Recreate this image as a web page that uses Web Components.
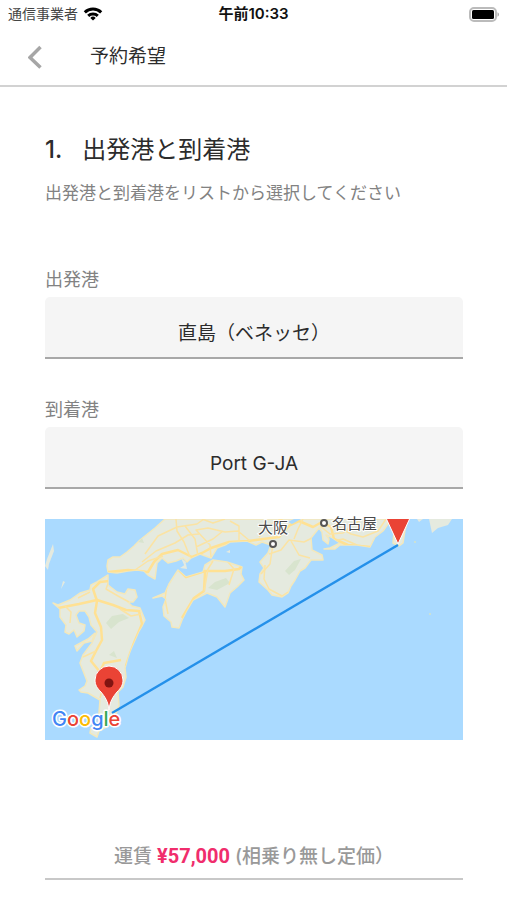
<!DOCTYPE html>
<html lang="ja">
<head>
<meta charset="utf-8">
<meta name="viewport" content="width=device-width, initial-scale=1">
<title>予約希望</title>
<style>
  :root {
    --ink: #2c2c2c;
    --muted: #828282;
    --field: #f5f5f5;
    --line: #a8a8a8;
    --accent: #f02d6c;
  }

  body {
    margin: 0;
    background: #fff;
    color: var(--ink);
    font-family: Inter, "Noto Sans CJK JP", sans-serif;
  }
</style>
</head>
<body>
<booking-page></booking-page>

<script>
  function define(name, html) {
    const template = document.createElement('template');
    template.innerHTML = html;

    customElements.define(name, class extends HTMLElement {
      connectedCallback() {
        if (this.shadowRoot) return;
        this.attachShadow({ mode: 'open' }).appendChild(template.content.cloneNode(true));
      }
    });
  }

  define('status-bar', `
    <style>
      :host {
        display: grid;
        grid-template-columns: 1fr auto 1fr;
        align-items: center;
        height: 28px;
        padding: 0 8px;
      }
      .carrier {
        display: flex;
        align-items: center;
        gap: 5px;
        font-size: 14px;
        line-height: 20px;
        color: #444;
      }
      .time {
        font-size: 15px;
        line-height: 20px;
        font-weight: 600;
        color: #111;
      }
      .battery {
        justify-self: end;
      }
      svg {
        display: block;
      }
    </style>
    <div class="carrier">
      <slot name="carrier"></slot>
      <svg width="20" height="14" viewBox="0 0 20 14" fill="none" stroke="#000" stroke-width="3">
        <path d="M1.8 5.3a11.8 11.8 0 0 1 16.4 0"/>
        <path d="M5.2 8.8a7 7 0 0 1 9.6 0"/>
        <path d="M10 13.6 7.3 10.9a3.9 3.9 0 0 1 5.4 0z" fill="#000" stroke="none"/>
      </svg>
    </div>
    <div class="time"><slot name="time"></slot></div>
    <svg class="battery" width="30" height="15" viewBox="0 0 30 15">
      <rect x="1" y="1" width="26" height="13" rx="4" fill="#fff" stroke="#bbb" stroke-width="2"/>
      <rect x="3" y="3" width="22" height="9" rx="1.5"/>
      <path d="M28.5 5.3c2 .9 2 3.5 0 4.4z" fill="#aaa"/>
    </svg>
  `);

  define('nav-header', `
    <style>
      :host {
        display: flex;
        align-items: center;
        gap: 42px;
        height: 57px;
        padding: 0 22px;
        border-bottom: 2px solid #d2d2d2;
      }
      button {
        padding: 0 6px;
        border: 0;
        background: none;
        cursor: pointer;
      }
      svg {
        display: block;
      }
      h1 {
        margin: 0;
        font-size: 19px;
        line-height: 28px;
        font-weight: 400;
      }
    </style>
    <button type="button" aria-label="戻る">
      <svg width="14" height="24" viewBox="0 0 14 24" fill="none" stroke="#a6a6a6" stroke-width="3.5">
        <path d="M12.5 2 2 12.500l10.500 10"/>
      </svg>
    </button>
    <h1><slot></slot></h1>
  `);

  define('step-heading', `
    <style>
      :host {
        display: block;
      }
      h2 {
        display: flex;
        gap: 20px;
        margin: 0;
        font-size: 24px;
        line-height: 36px;
        font-weight: 400;
      }
      .number {
        font-weight: 500;
      }
      p {
        margin: 11px 0 0;
        font-size: 17px;
        line-height: 28px;
        color: var(--muted);
      }
    </style>
    <h2><span class="number"><slot name="number"></slot></span><slot name="title"></slot></h2>
    <p><slot></slot></p>
  `);

  // A select has to own its options, so label and value come in as attributes
  customElements.define('port-select', class extends HTMLElement {
    connectedCallback() {
      if (this.shadowRoot) return;
      const root = this.attachShadow({ mode: 'open' });
      root.innerHTML = `
        <style>
          :host {
            display: block;
          }
          label {
            display: block;
            margin-bottom: 3px;
            font-size: 18px;
            line-height: 28px;
            color: var(--muted);
          }
          select {
            display: block;
            width: 100%;
            height: 62px;
            margin: 0;
            padding: 12px 0 0;
            appearance: none;
            border: 0;
            border-bottom: 2px solid var(--line);
            border-radius: 5px 5px 0 0;
            background: var(--field);
            color: var(--ink);
            font-family: inherit;
            font-size: 19px;
            text-align: center;
            text-align-last: center;
          }
        </style>
        <label for="port">${this.getAttribute('label')}</label>
        <select id="port"><option>${this.getAttribute('value')}</option></select>
      `;
    }
  });

  define('route-map', `
    <style>
      :host {
        display: block;
      }
      svg {
        display: block;
        width: 100%;
        height: auto;
        overflow: visible;
      }
      .city {
        font-family: "Noto Sans CJK JP", sans-serif;
        font-size: 15px;
        fill: #4a4a4a;
        stroke: #fff;
        stroke-width: 2;
        paint-order: stroke;
      }
      .logo {
        font-family: Inter, sans-serif;
        font-size: 20px;
        font-weight: 500;
        stroke: #fff;
        stroke-width: 3;
        stroke-linejoin: round;
        paint-order: stroke;
      }
    </style>
    <svg viewBox="0 0 418 221" role="img" aria-label="航路の地図">
      <defs>
        <clipPath id="frame"><rect width="418" height="221"/></clipPath>
        <path id="honshu" d="M120 0 110 9 95 21 89 27 82 33 75 38 68 38 63 41 62 47 63 53 72 54 83 52 92 51 99 52 103 56 110 60 111 52 112 44 117 39 123 44 131 42 138 39 142 43 146 39 155 35 166 39 172 29 180 26 185 23 202 22 211 26 217 23 226 26 223 34 215 43 219 49 215 55 214 63 223 71 227 76 237 78 243 74 246 67 250 61 255 52 260 49 266 41 278 41 277 36 267 31 266 19 274 9 277 13 278 21 283 25 284 20 281 16 286 18 295 24 285 29 279 30 290 30 295 26 312 26 325 28 330 18 338 12 345 2 350 4 348 24 354 27 358 24 360 11 363 0z"/>
        <path id="chiba" d="M372 0 374 3 378 0zM384 0 387 14 393 9 403 6 407 0z"/>
        <path id="shikoku" d="M133 51 141 58 158 53 160 46 168 41 182 43 197 48 196 55 199 61 192 68 185 74 180 88 172 78 162 74 154 78 148 81 142 91 137 101 134 109 127 108 126 103 119 97 118 88 121 80 117 77 108 79 120 74 124 65z"/>
        <path id="kyushu" d="M8 84 13 86 25 81 35 74 45 71 46 66 52 63 63 56 63 66 72 73 80 75 83 70 90 71 92 78 88 83 83 83 87 87 95 89 100 101 97 107 94 112 90 121 86 130 83 138 80 149 81 158 78 168 73 173 74 186 70 198 63 207 54 212 52 218 45 214 46 209 53 207 55 181 43 174 36 173 34 171 40 167 42 162 35 144 38 136 47 124 52 113 46 106 44 98 40 92 34 92 31 96 34 104 40 106 39 112 32 118 29 111 24 115 20 113 21 106 15 98 15 90zM30 127 43 120 50 114 47 122 39 124 32 132z"/>
        <path id="islands" d="M0 47 2 40 8 25 9 32 4 45 3 51zM16 70 18 62 20 63zM181 33 185 31 185 34zM136 39 141 43 140 48zM135 49 141 45 142 50z"/>
        <clipPath id="land">
          <use href="#honshu"/><use href="#shikoku"/><use href="#kyushu"/>
        </clipPath>
      </defs>
      <g clip-path="url(#frame)">
        <rect width="418" height="221" fill="#aadaff"/>
        <g stroke="#f3e8bc" stroke-width="1.500" fill="#e5eadf" stroke-linejoin="round">
          <use href="#honshu"/><use href="#shikoku"/><use href="#kyushu"/>
        </g>
        <g fill="#e5eadf"><use href="#chiba"/><use href="#islands"/></g>
        <g clip-path="url(#land)">
          <g fill="#d8e4ce">
            <path d="M61 104 67 97 78 95 84 99 74 103 66 110zM163 69 170 63 181 59 185 64 172 71zM240 52 249 42 256 40 250 51 244 56zM64 136 69 132 72 139zM93 23 97 19 99 24z"/>
          </g>
          <g fill="none" stroke="#ffe193" stroke-width="2.500" stroke-linejoin="round">
            <path d="M63 53 83 51 103 53 109 43 117 35 133 31 147 38 157 34 166 29 184 23 203 22 218 20 234 18 245 6 254 2 268 8 277 3 286 8 289 20 303 26 325 28"/>
            <path d="M64 62 55 63 48 70 52 82 50 94 56 108 57 121 51 132 46 142 55 153 59 144 76 141"/>
            <path d="M13 89 34 85 52 81 68 86 81 91 94 92 97 105 89 124 81 147"/>
            <path d="M134 51 141 58 160 52 180 52 194 50 206 38 215 27M160 53 159 72 149 79 137 99"/>
          </g>
          <g fill="none" stroke="#fbe3a3" stroke-width="1.500" stroke-linejoin="round">
            <path d="M131 0 132 12 139 23 145 38M97 43 111 32 130 24 143 16 154 15M100 35 113 17 132 8 152 5 159 0M90 51 103 42 118 37"/>
            <path d="M153 37 150 20 140 7M166 38 165 26 151 11 163 9 180 13 193 12 205 22M157 0 168 4 180 0M194 22 194 7 185 2M151 28 168 20 178 12"/>
            <path d="M224 35 236 31 244 21 259 23 267 19M228 25 225 45 216 55M246 22 254 36 265 39M237 0 234 18M258 0 253 10 249 20M214 18 221 8 236 0"/>
            <path d="M220 46 219 60 224 70 237 77 243 73M275 7 285 15 298 14 309 5 317 0M290 6 306 15 318 18 333 12 341 0M284 23 298 20 312 26"/>
            <path d="M20 87 26 93 25 104M45 73 33 79M64 62 61 70 73 77 84 83M75 90 86 97 96 95M38 138 51 132M52 155 58 168 55 179M168 42 163 50 159 73M183 43 189 50 184 66M122 66 120 80 123 95"/>
          </g>
          <path d="M243 3 249 0 256 0 247 5z" fill="#aadaff"/>
        </g>
        <g fill="#d4e3c8"><circle cx="370" cy="23" r="1"/><circle cx="385" cy="95" r="1"/></g>
        <path d="M67 194 353 26" stroke="#2490ea" stroke-width="2.500"/>
        <path d="M341-1 353 25 365-1z" fill="#ea4335" stroke="#fff"/>
        <path d="M64 191c-1-9-4-13-8-18-4-4-6-7-6-12a14 14 0 0 1 28 0c0 5-2 8-6 12-4 5-7 9-8 18z" fill="#ea4335" stroke="#fff"/>
        <circle cx="64" cy="164" r="4.500" fill="#811411"/>
      </g>
      <g fill="#fff" stroke="#555" stroke-width="2">
        <circle cx="228" cy="25" r="3"/>
        <circle cx="279" cy="4" r="3"/>
      </g>
      <text class="city" x="213" y="14">大阪</text>
      <text class="city" x="287" y="10">名古屋</text>
      <text class="logo" x="7" y="207"><tspan fill="#4285f4">G</tspan><tspan fill="#ea4335">o</tspan><tspan fill="#fbbc05">o</tspan><tspan fill="#4285f4">g</tspan><tspan fill="#34a853">l</tspan><tspan fill="#ea4335">e</tspan></text>
    </svg>
  `);

  define('fare-line', `
    <style>
      :host {
        display: block;
        padding-bottom: 7px;
        border-bottom: 2px solid #c8c8c8;
        font-size: 19px;
        line-height: 28px;
        font-weight: 500;
        text-align: center;
        color: #999;
      }
      strong {
        font-family: Roboto, sans-serif;
        font-size: 20px;
        font-weight: 700;
        color: var(--accent);
      }
    </style>
    <slot name="label"></slot>
    <strong><slot name="price"></slot></strong>
    <slot name="note"></slot>
  `);

  define('booking-page', `
    <style>
      :host {
        display: block;
      }
      main {
        padding: 45px 44px 20px 45px;
      }
      port-select {
        margin-top: 37px;
      }
      step-heading + port-select {
        margin-top: 59px;
      }
      route-map {
        margin-top: 30px;
      }
      fare-line {
        margin-top: 102px;
      }
    </style>
    <status-bar>
      <span slot="carrier">通信事業者</span>
      <span slot="time">午前10:33</span>
    </status-bar>
    <nav-header>予約希望</nav-header>
    <main>
      <step-heading>
        <span slot="number">1.</span>
        <span slot="title">出発港と到着港</span>
        出発港と到着港をリストから選択してください
      </step-heading>
      <port-select label="出発港" value="直島（ベネッセ）"></port-select>
      <port-select label="到着港" value="Port G-JA"></port-select>
      <route-map></route-map>
      <fare-line>
        <span slot="label">運賃</span>
        <span slot="price">¥57,000</span>
        <span slot="note">(相乗り無し定価）</span>
      </fare-line>
    </main>
  `);
</script>
</body>
</html>
